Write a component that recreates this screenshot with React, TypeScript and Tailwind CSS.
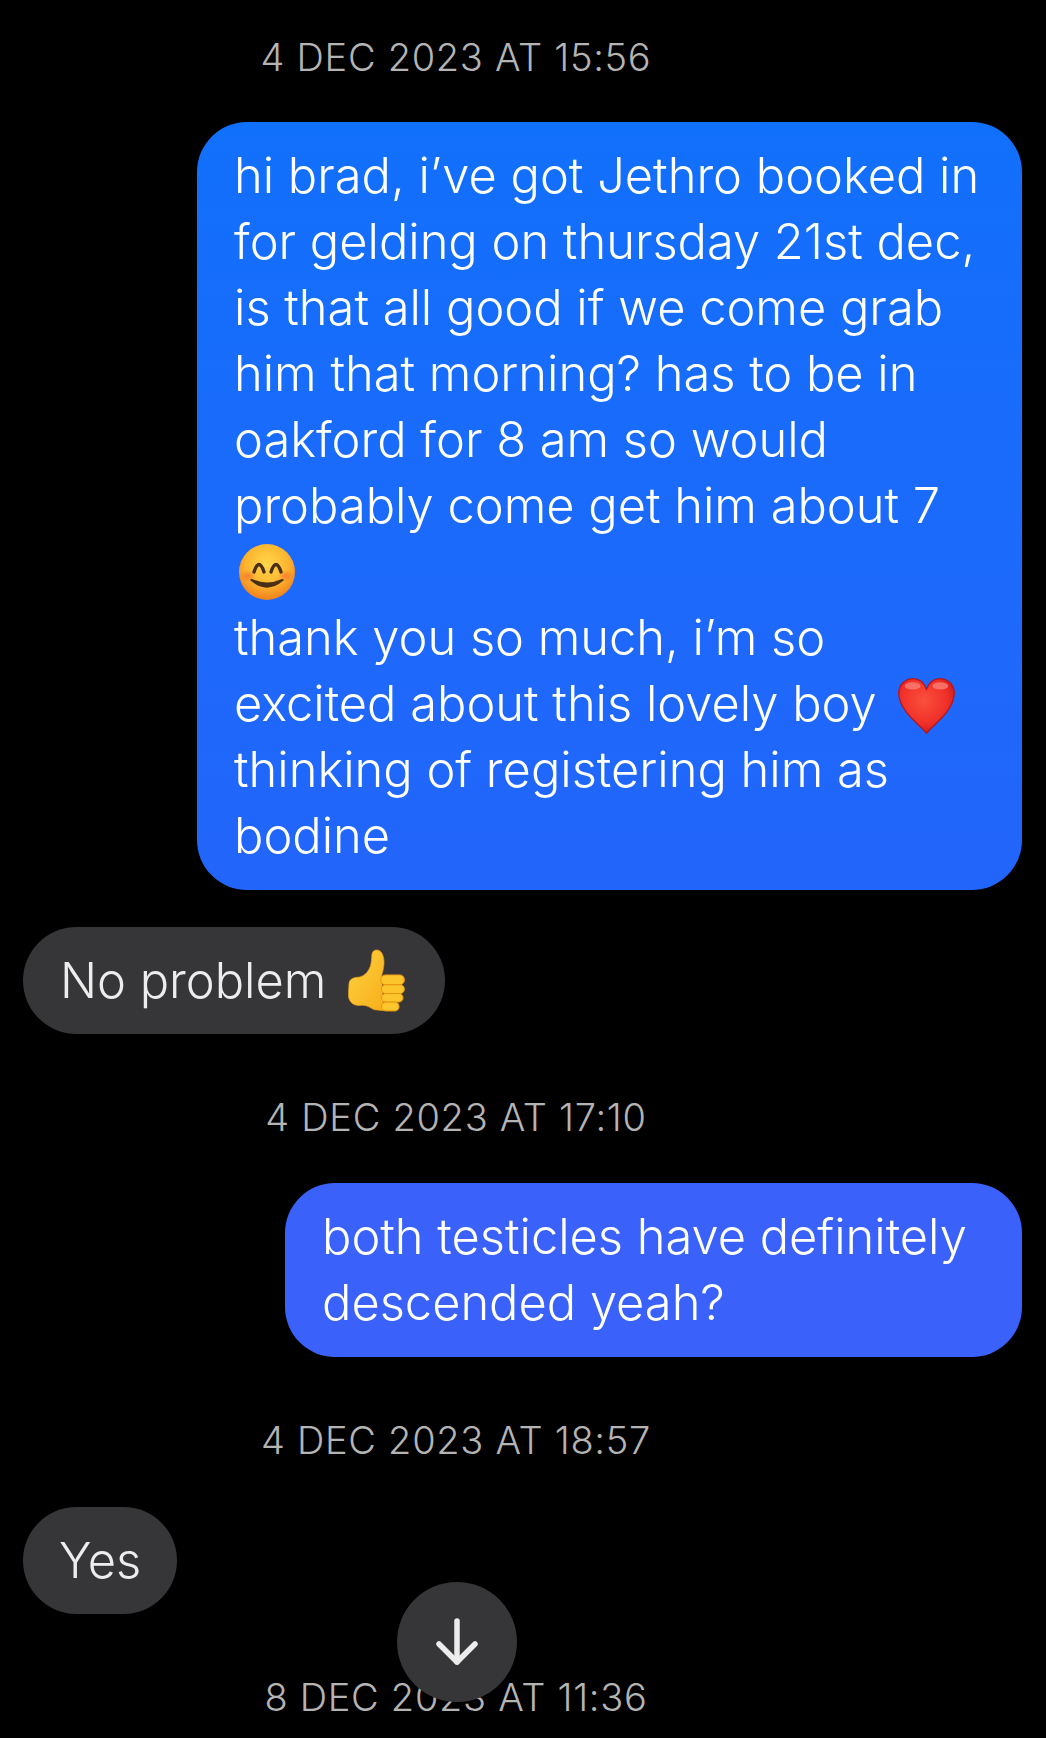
import React from "react";

function Smile() {
  return (
    <svg viewBox="0 0 56 56" className="w-[56px] h-[56px] block">
      <defs>
        <radialGradient id="sm" cx="50%" cy="36%" r="64%">
          <stop offset="0%" stopColor="#ffd64a" />
          <stop offset="58%" stopColor="#fdb630" />
          <stop offset="100%" stopColor="#f0801c" />
        </radialGradient>
        <radialGradient id="bl" cx="50%" cy="50%" r="50%">
          <stop offset="0%" stopColor="#f5772f" stopOpacity="0.85" />
          <stop offset="100%" stopColor="#f5772f" stopOpacity="0" />
        </radialGradient>
      </defs>
      <circle cx="28" cy="28" r="28" fill="url(#sm)" />
      <ellipse cx="9" cy="32" rx="8" ry="6" fill="url(#bl)" />
      <ellipse cx="47" cy="32" rx="8" ry="6" fill="url(#bl)" />
      <path d="M15 28 Q20 13 25 28" fill="none" stroke="#4a2f17" strokeWidth="3.4" strokeLinecap="round" />
      <path d="M32 28 Q37 13 42 28" fill="none" stroke="#4a2f17" strokeWidth="3.4" strokeLinecap="round" />
      <path d="M12.5 36 Q28 49 43.5 36 Q28 43 12.5 36 Z" fill="#4a2f17" stroke="#4a2f17" strokeWidth="2.2" strokeLinejoin="round" />
    </svg>
  );
}

function Heart() {
  return (
    <svg viewBox="0 0 172 170" className="w-[57px] h-[56px] block mt-[3px]">
      <defs>
        <radialGradient id="ht" cx="45%" cy="40%" r="62%">
          <stop offset="0%" stopColor="#fb4f3c" />
          <stop offset="70%" stopColor="#ef2f29" />
          <stop offset="100%" stopColor="#cc1a1c" />
        </radialGradient>
      </defs>
      <path
        d="M86 168 C72 146 4 104 2 48 C1 20 22 2 46 2 C64 2 78 14 86 34 C94 14 108 2 126 2 C150 2 171 20 170 48 C168 104 100 146 86 168 Z"
        fill="url(#ht)"
        stroke="#b4171b"
        strokeWidth="4"
      />
      <ellipse cx="44" cy="24" rx="24" ry="11" fill="#ff9a8a" opacity="0.6" />
      <ellipse cx="128" cy="24" rx="24" ry="11" fill="#ff9a8a" opacity="0.6" />
    </svg>
  );
}

function Thumb() {
  return (
    <svg viewBox="32 12 174 192" className="w-[57px] h-[63px] block">
      <defs>
        <linearGradient id="th" x1="0" y1="0" x2="1" y2="1">
          <stop offset="0%" stopColor="#ffd23f" />
          <stop offset="100%" stopColor="#f7ae1c" />
        </linearGradient>
      </defs>
      <path
        d="M35 118 C35 105 48 98 62 98 C80 96 92 85 100 65 C104 52 104 40 105 28 C107 10 132 10 138 30 C145 48 142 70 135 92 L140 200 L112 197 C100 192 90 182 70 184 C50 186 33 175 33 150 Z"
        fill="url(#th)"
        stroke="#eb9a14"
        strokeWidth="2"
      />
      <rect x="132" y="91" width="72" height="30" rx="14" fill="#fcc52c" stroke="#e8950f" strokeWidth="3" />
      <rect x="134" y="121" width="70" height="27" rx="13" fill="#fcc52c" stroke="#e8950f" strokeWidth="3" />
      <rect x="134" y="148" width="66" height="26" rx="13" fill="#fcc52c" stroke="#e8950f" strokeWidth="3" />
      <rect x="134" y="174" width="54" height="27" rx="13" fill="#fcc52c" stroke="#e8950f" strokeWidth="3" />
    </svg>
  );
}

function DownArrow() {
  return (
    <svg viewBox="0 0 46 50" className="w-[46px] h-[50px] block" fill="none" stroke="#ececec" strokeWidth="5.5" strokeLinecap="round" strokeLinejoin="round">
      <path d="M23 4 V45" />
      <path d="M5 27 L23 45 L41 27" />
    </svg>
  );
}

function Stamp({ text, className }: { text: string; className: string }) {
  return (
    <div className={`w-[912px] text-center text-[38px] font-light leading-[40px] tracking-[0.7px] text-[#b4b4b4] whitespace-nowrap ${className}`}>
      {text}
    </div>
  );
}

export default function App() {
  return (
    <div
      className="relative h-[1738px] w-[1046px] overflow-hidden bg-black pt-[37px] text-[48.8px] font-[350] leading-[66px] text-white"
      style={{ fontFamily: 'Inter, "Liberation Sans", sans-serif' }}
    >
      <Stamp text="4 DEC 2023 AT 15:56" className="" />

      <div className="mt-[45px] flex justify-end pr-[24px]">
        <div className="w-[825px] rounded-[50px] bg-gradient-to-b from-[#1170fb] to-[#2265fb] px-[37px] py-[21px] whitespace-nowrap">
          <div>hi brad, i’ve got Jethro booked in</div>
          <div>for gelding on thursday 21st dec,</div>
          <div>is that all good if we come grab</div>
          <div>him that morning? has to be in</div>
          <div>oakford for 8 am so would</div>
          <div>probably come get him about 7</div>
          <div className="flex h-[66px] items-center pl-[5px]">
            <Smile />
          </div>
          <div>thank you so much, i’m so</div>
          <div className="flex items-center gap-[21px]">
            <span>excited about this lovely boy</span>
            <Heart />
          </div>
          <div>thinking of registering him as</div>
          <div>bodine</div>
        </div>
      </div>

      <div className="mt-[37px] pl-[23px]">
        <div className="flex h-[107px] w-[422px] items-center gap-[22px] rounded-[54px] bg-[#363638] pl-[37px] text-[#ededed] whitespace-nowrap">
          <span>No problem</span>
          <Thumb />
        </div>
      </div>

      <Stamp text="4 DEC 2023 AT 17:10" className="mt-[63px]" />

      <div className="mt-[46px] flex justify-end pr-[24px]">
        <div className="w-[737px] rounded-[50px] bg-[#3a62fb] px-[37px] py-[21px] whitespace-nowrap">
          <div>both testicles have definitely</div>
          <div>descended yeah?</div>
        </div>
      </div>

      <Stamp text="4 DEC 2023 AT 18:57" className="mt-[63px]" />

      <div className="mt-[47px] pl-[23px]">
        <div className="flex h-[107px] w-[154px] items-center justify-center rounded-[54px] bg-[#363638] text-[#ededed]">
          Yes
        </div>
      </div>

      <Stamp text="8 DEC 2023 AT 11:36" className="mt-[63px]" />

      <div className="absolute left-[397px] top-[1582px] flex h-[120px] w-[120px] items-center justify-center rounded-full bg-[#363638]">
        <DownArrow />
      </div>
    </div>
  );
}
